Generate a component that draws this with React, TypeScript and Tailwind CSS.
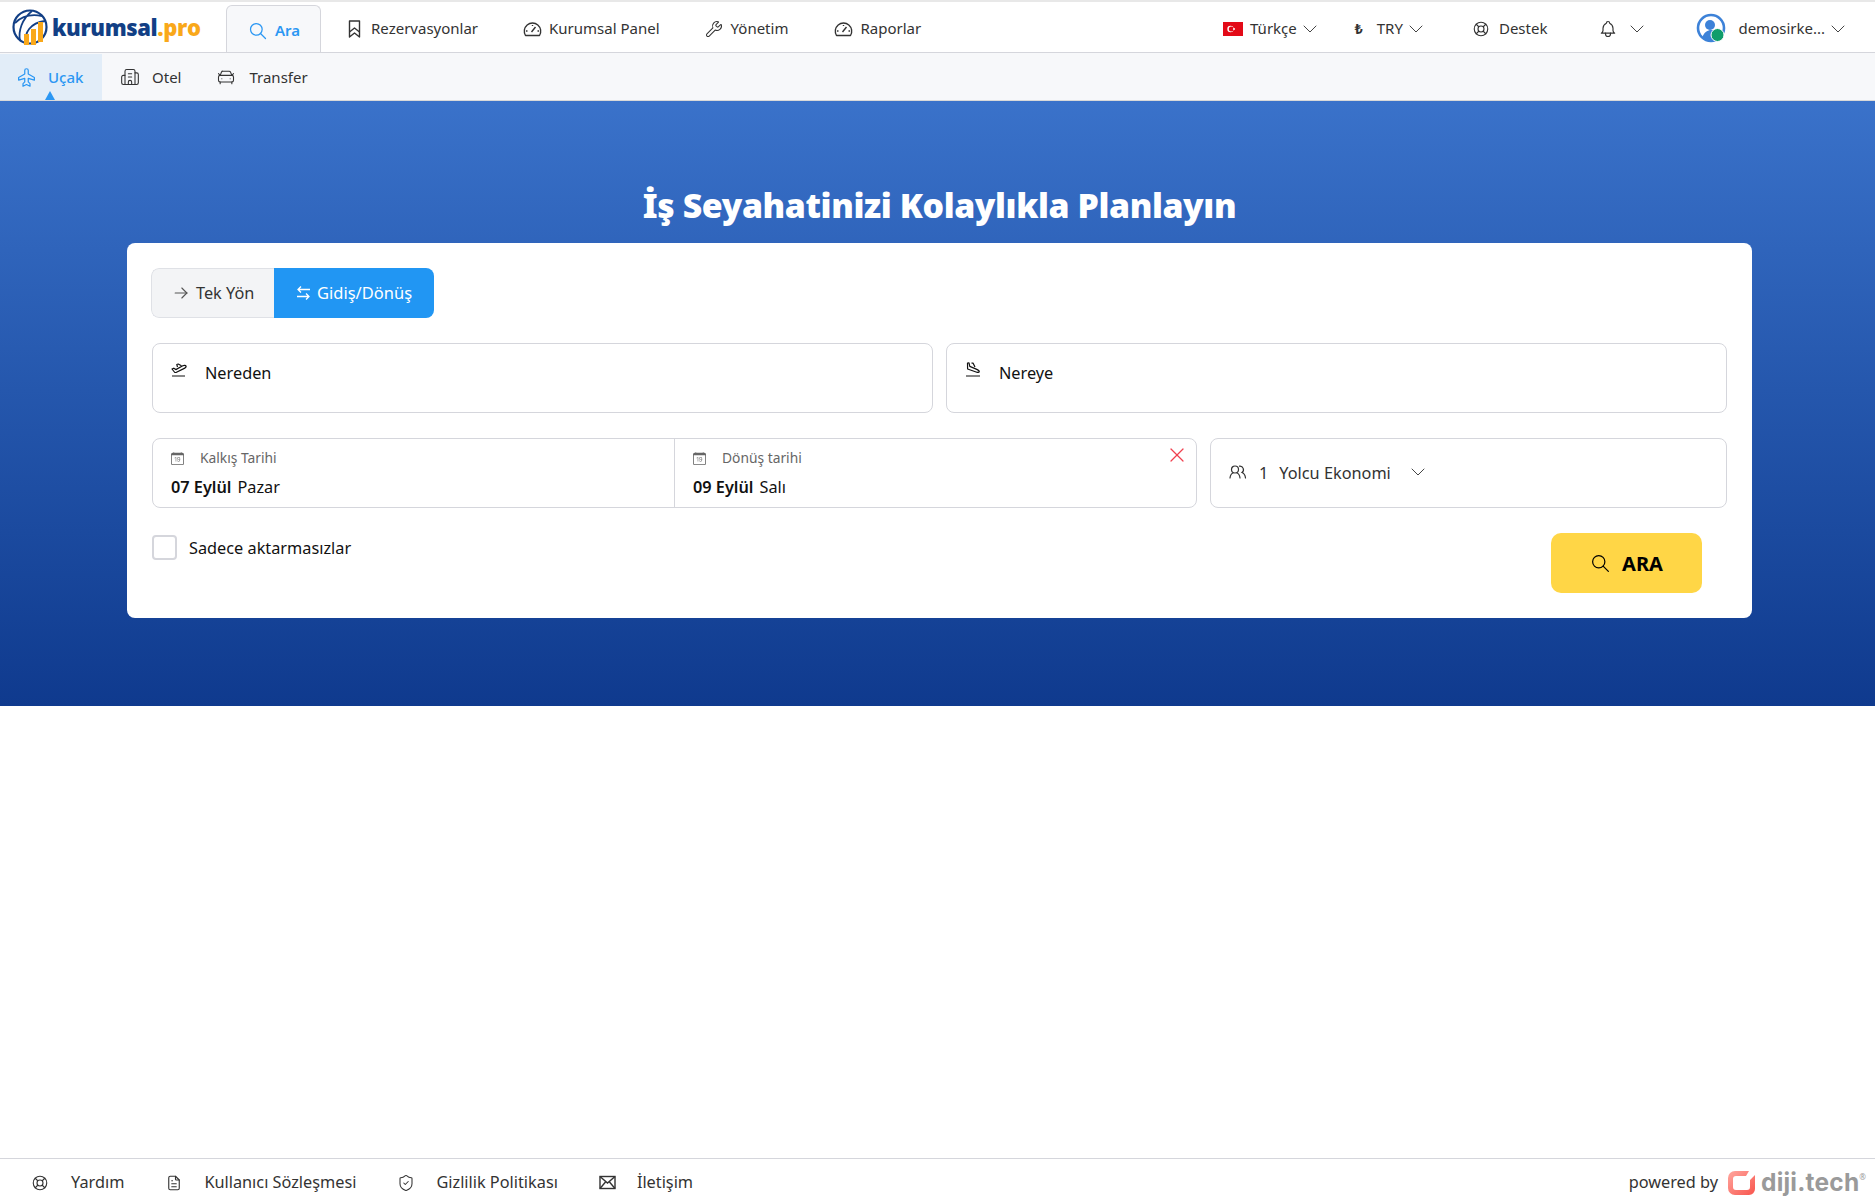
import { Building2, CarFront, ShieldCheck, Wrench } from "lucide-react";
import { BsCalendarDate } from "react-icons/bs";
import {
  TbArrowRight,
  TbBell,
  TbChevronDown,
  TbFileText,
  TbLifebuoy,
  TbPlane,
  TbSearch,
  TbX,
} from "react-icons/tb";

function Logo() {
  return (
    <div className="flex items-center">
      <svg width="37" height="37" viewBox="0 0 37 37" fill="none" className="ml-[12px]">
        <circle cx="18" cy="18" r="16.5" stroke="#123f85" strokeWidth="2.2" />
        <path d="M3 14C10 7 20 5 30 7M8 32C6 22 10 10 20 2M14 34C12 24 18 14 33 12" stroke="#123f85" strokeWidth="1.8" />
        <rect x="12" y="25" width="5" height="11" fill="#f9a81a" />
        <rect x="19" y="20" width="5" height="16" fill="#f9a81a" />
        <rect x="26" y="13" width="5" height="20" fill="#f9a81a" />
      </svg>
      <span className="ml-[3px] text-[22px] font-extrabold leading-none tracking-[-0.4px] text-[#123f85] font-['Open_Sans',sans-serif]">
        kurumsal<span className="text-[#f9a81a]">.pro</span>
      </span>
    </div>
  );
}

function TurkishFlag() {
  return (
    <svg width="20" height="14" viewBox="0 0 20 14">
      <rect width="20" height="14" fill="#e30a17" />
      <circle cx="7.5" cy="7" r="3.2" fill="#fff" />
      <circle cx="8.3" cy="7" r="2.5" fill="#e30a17" />
      <circle cx="11" cy="7" r="1" fill="#fff" />
    </svg>
  );
}

function Avatar() {
  return (
    <svg width="31" height="31" viewBox="0 0 31 31" fill="none">
      <circle cx="15" cy="15" r="13" stroke="#3d82d8" strokeWidth="2.6" />
      <circle cx="14" cy="12" r="5" fill="#3d82d8" />
      <path d="M6 25c2-6 6-8 9-8s4 2 6 4l-3 7H10z" fill="#3d82d8" />
      <circle cx="21.5" cy="22" r="6.5" fill="#0f9d6b" stroke="#fff" strokeWidth="1" />
    </svg>
  );
}

function BookmarkIcon() {
  return (
    <svg width="13" height="18" viewBox="0 0 13 18" fill="none" stroke="#333" strokeWidth="1.4" strokeLinejoin="round">
      <path d="M1.5 1h10v16l-5-4-5 4z" />
      <path d="M1.5 12l5-4 5 4" />
    </svg>
  );
}

function GaugeIcon() {
  return (
    <svg width="19" height="16" viewBox="0 0 19 16" fill="none" stroke="#333" strokeWidth="1.4" strokeLinejoin="round">
      <path d="M2.5 14.5A8.2 8.2 0 1 1 16.5 14.5z" />
      <path d="M8.5 11l4-5M4.5 10H3M16 10h-1.5M9.5 4v1" />
    </svg>
  );
}

function DepartureIcon() {
  return (
    <svg width="17" height="15" viewBox="0 0 17 15" fill="none" stroke="#111" strokeWidth="1.2" strokeLinejoin="round">
      <path d="M1 7l1.8-.8 2 1.4 7-3.8c1.4-.7 2.8-.5 3.2.3.4.8-.2 1.5-1.2 2L5 10.5H3.8z" />
      <path d="M6.5 5l-.7-2.5 1.4-.5 3.3 1.8M1 14h13" />
    </svg>
  );
}

function ArrivalIcon() {
  return (
    <svg width="17" height="15" viewBox="0 0 17 15" fill="none" stroke="#111" strokeWidth="1.2" strokeLinejoin="round">
      <path d="M2.5 1L4 .8l.8 3.6 7 3c1.4.6 2.6 1.6 2.4 2.4-.2.7-1.2.7-2.4.4L2.6 7z" />
      <path d="M6.5 1.2L8 1l2 4M1 14h14" />
    </svg>
  );
}

function SwapIcon() {
  return (
    <svg width="15" height="14" viewBox="0 0 15 14" fill="none" stroke="#fff" strokeWidth="1.3">
      <path d="M14 3.5H2M5 .5l-3 3 3 3M1 10.5h12M10 7.5l3 3-3 3" />
    </svg>
  );
}

function PeopleIcon() {
  return (
    <svg width="18" height="14" viewBox="0 0 18 14" fill="none" stroke="#333" strokeWidth="1.2" strokeLinecap="round">
      <circle cx="6" cy="4.5" r="3.5" />
      <path d="M1 13c.3-2.6 1.6-4.5 3-5M11 13c-.3-2.6-1.6-4.5-3-5" />
      <path d="M10.5 1.2a3.5 3.5 0 0 1 2.5 6.3c1.6.6 3.2 2.6 3.5 5.5" />
    </svg>
  );
}

function MailIcon() {
  return (
    <svg width="17" height="15" viewBox="0 0 17 15" fill="none" stroke="#333" strokeWidth="1.4">
      <rect x="1" y="1.5" width="15" height="12" />
      <path d="M1 1.5l7.5 6.5 7.5-6.5M1 13.5l5.5-6.5M16 13.5l-5.5-6.5" />
    </svg>
  );
}

function DijiLogo() {
  return (
    <div className="ml-[10px] flex items-center">
      <svg width="27" height="24" viewBox="0 0 27 24" fill="none">
        <defs>
          <linearGradient id="diji" x1="0" y1="0" x2="1" y2="1">
            <stop offset="0" stopColor="#ffa79f" />
            <stop offset="1" stopColor="#f9554d" />
          </linearGradient>
        </defs>
        <path d="M7 0h14l-3 5H8a3 3 0 0 0-3 3v8a3 3 0 0 0 3 3h11a3 3 0 0 0 3-3V9l5-5v14a6 6 0 0 1-6 6H7a7 7 0 0 1-7-7V7a7 7 0 0 1 7-7z" fill="url(#diji)" />
      </svg>
      <span className="ml-[6px] text-[24.5px] font-bold leading-none tracking-[0.2px] text-[#9a9a9a] font-['Inter',sans-serif]">
        diji.tech
      </span>
      <span className="mb-[12px] text-[8px] leading-none text-[#9a9a9a]">®</span>
    </div>
  );
}

function Chev({ className = "" }: { className?: string }) {
  return (
    <span className={`flex w-[16px] justify-center text-[#444] ${className}`}>
      <TbChevronDown size={24} strokeWidth={1} className="shrink-0" />
    </span>
  );
}

export default function App() {
  return (
    <div className="flex h-[1203px] flex-col bg-white text-[15px] text-[#333] font-['Noto_Sans',sans-serif]">
      {/* Üst menü */}
      <header className="flex h-[53px] items-center border-t-2 border-b border-t-[#e8e8e8] border-b-[#d5d6dc] bg-white">
        <div className="w-[226px]">
          <Logo />
        </div>
        <div className="flex h-[47px] w-[95px] items-center self-end rounded-t-[6px] border border-b-0 border-[#d5d6dc] bg-[#f7f8fa] pl-[21px] pt-[3px] font-semibold text-[#2b97f3]">
          <TbSearch size={20} strokeWidth={1.5} />
          <span className="ml-[7px]">Ara</span>
        </div>
        <nav className="flex items-center pt-[3px]">
          <div className="ml-[27px] flex items-center">
            <BookmarkIcon />
            <span className="ml-[10px]">Rezervasyonlar</span>
          </div>
          <div className="ml-[45px] flex items-center">
            <GaugeIcon />
            <span className="ml-[7px]">Kurumsal Panel</span>
          </div>
          <div className="ml-[45px] flex items-center">
            <Wrench size={18} strokeWidth={1.4} />
            <span className="ml-[8px]">Yönetim</span>
          </div>
          <div className="ml-[46px] flex items-center">
            <GaugeIcon />
            <span className="ml-[7px]">Raporlar</span>
          </div>
        </nav>
        <div className="ml-auto flex items-center pr-[29px] pt-[3px]">
          <TurkishFlag />
          <span className="ml-[7px]">Türkçe</span>
          <Chev className="ml-[5px]" />
          <span className="ml-[37px] text-[14px] font-bold">₺</span>
          <span className="ml-[14px]">TRY</span>
          <Chev className="ml-[5px]" />
          <TbLifebuoy size={18} strokeWidth={1.5} className="ml-[48px]" />
          <span className="ml-[9px]">Destek</span>
          <TbBell size={20} strokeWidth={1.4} className="ml-[51px]" />
          <Chev className="ml-[11px]" />
          <div className="ml-[51px]">
            <Avatar />
          </div>
          <span className="ml-[11px]">demosirke...</span>
          <Chev className="ml-[5px]" />
        </div>
      </header>

      {/* Alt sekmeler */}
      <div className="flex h-[47px] items-stretch bg-[#f7f8fa] pt-[1px]">
        <div className="relative flex w-[102px] items-center bg-[#e2edf8] pl-[16px] font-medium text-[#2b97f3]">
          <TbPlane size={21} strokeWidth={1.4} className="-rotate-90" />
          <span className="ml-[11px]">Uçak</span>
          <span className="absolute bottom-0 left-[45px] h-0 w-0 border-x-[5px] border-b-[9px] border-x-transparent border-b-[#2b97f3]" />
        </div>
        <div className="ml-[18px] flex items-center">
          <Building2 size={20} strokeWidth={1.3} />
          <span className="ml-[12px]">Otel</span>
        </div>
        <div className="ml-[35px] flex items-center">
          <CarFront size={20} strokeWidth={1.3} />
          <span className="ml-[13px]">Transfer</span>
        </div>
      </div>

      {/* Arama alanı */}
      <section className="flex h-[606px] flex-col items-center border-t border-t-[#d9d9d9] bg-gradient-to-b from-[#3a72ca] to-[#0f3a8e] pl-[4px]">
        <h1 className="mt-[82px] text-[33.8px] font-black leading-[44px] tracking-[-0.4px] text-white">
          İş Seyahatinizi Kolaylıkla Planlayın
        </h1>
        <div className="mt-[16px] h-[375px] w-[1625px] rounded-[8px] bg-white px-[24px] pt-[25px]">
          <div className="flex h-[50px] w-[283px] overflow-hidden rounded-[8px]">
            <div className="flex w-[123px] items-center rounded-l-[8px] border border-r-0 border-[#dfe1e6] bg-[#f3f4f6] pl-[19px] text-[16.3px]">
              <TbArrowRight size={20} strokeWidth={1.3} className="text-[#555]" />
              <span className="ml-[5px]">Tek Yön</span>
            </div>
            <div className="flex flex-1 items-center bg-[#2196f3] pl-[22px] text-[16.5px] text-white">
              <SwapIcon />
              <span className="ml-[6px]">Gidiş/Dönüş</span>
            </div>
          </div>

          <div className="mt-[25px] flex gap-[13px] pl-[1px] pr-[1px]">
            <div className="flex h-[70px] flex-1 items-start rounded-[8px] border border-[#d5d6dc] pl-[18px] pt-[17px]">
              <span className="mt-[1px]">
                <DepartureIcon />
              </span>
              <span className="ml-[17px] text-[16.3px] text-[#111]">Nereden</span>
            </div>
            <div className="flex h-[70px] flex-1 items-start rounded-[8px] border border-[#d5d6dc] pl-[18px] pt-[17px]">
              <span className="mt-[1px]">
                <ArrivalIcon />
              </span>
              <span className="ml-[17px] text-[16.3px] text-[#111]">Nereye</span>
            </div>
          </div>

          <div className="mt-[25px] flex gap-[13px] pl-[1px] pr-[1px]">
            <div className="flex h-[70px] w-[1045px] rounded-[8px] border border-[#d5d6dc]">
              <div className="w-[522px] border-r border-[#d5d6dc] pl-[18px] pt-[9px]">
                <div className="flex items-center text-[13.8px] text-[#666]">
                  <BsCalendarDate size={13} />
                  <span className="ml-[16px]">Kalkış Tarihi</span>
                </div>
                <div className="mt-[6px] text-[16.3px] text-[#111]">
                  <span className="font-semibold">07 Eylül</span>
                  <span className="ml-[6px]">Pazar</span>
                </div>
              </div>
              <div className="relative flex-1 pl-[18px] pt-[9px]">
                <div className="flex items-center text-[13.8px] text-[#666]">
                  <BsCalendarDate size={13} />
                  <span className="ml-[16px]">Dönüş tarihi</span>
                </div>
                <div className="mt-[6px] text-[16.3px] text-[#111]">
                  <span className="font-semibold">09 Eylül</span>
                  <span className="ml-[6px]">Salı</span>
                </div>
                <TbX size={24} strokeWidth={1.2} className="absolute right-[7px] top-[4px] text-[#f0404f]" />
              </div>
            </div>
            <div className="flex h-[70px] flex-1 items-center rounded-[8px] border border-[#d5d6dc] pl-[18px] text-[16.3px]">
              <span className="mb-[3px]">
                <PeopleIcon />
              </span>
              <span className="ml-[12px]">1</span>
              <span className="ml-[11px]">Yolcu Ekonomi</span>
              <Chev className="mb-[3px] ml-[19px]" />
            </div>
          </div>

          <div className="flex items-start pl-[1px]">
            <label className="mt-[26px] flex items-center">
              <span className="h-[25px] w-[25px] rounded-[4px] border-2 border-[#d5d6dc] bg-white" />
              <span className="ml-[12px] pt-[2px] text-[16.3px] text-[#111]">Sadece aktarmasızlar</span>
            </label>
            <button className="ml-auto mr-[26px] mt-[25px] flex h-[60px] w-[151px] items-center justify-center rounded-[10px] bg-[#ffd646] pt-[1px] text-[20px] font-bold text-black">
              <TbSearch size={21} strokeWidth={1.4} />
              <span className="ml-[11px]">ARA</span>
            </button>
          </div>
        </div>
      </section>

      {/* Alt bilgi */}
      <footer className="mt-auto flex h-[45px] items-center border-t border-[#d5d6dc] pt-[3px] text-[16.3px] text-[#333]">
        <div className="flex items-center pl-[31px]">
          <TbLifebuoy size={18} strokeWidth={1.5} />
          <span className="ml-[22px]">Yardım</span>
          <TbFileText size={18} strokeWidth={1.5} className="ml-[41px]" />
          <span className="ml-[21px]">Kullanıcı Sözleşmesi</span>
          <ShieldCheck size={18} strokeWidth={1.4} className="ml-[41px]" />
          <span className="ml-[21px]">Gizlilik Politikası</span>
          <span className="ml-[41px]">
            <MailIcon />
          </span>
          <span className="ml-[21px]">İletişim</span>
        </div>
        <div className="ml-auto flex items-center pr-[9px]">
          <span>powered by</span>
          <DijiLogo />
        </div>
      </footer>
    </div>
  );
}
